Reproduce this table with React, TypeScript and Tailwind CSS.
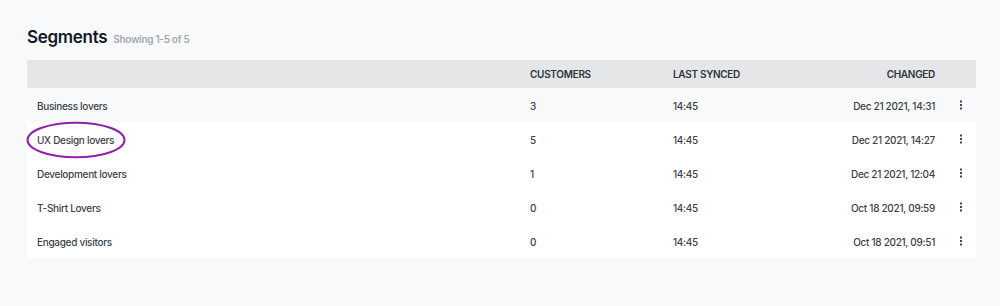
import React from "react";

const rows = [
  { name: "Business lovers", customers: "3", synced: "14:45", changed: "Dec 21 2021, 14:31", bg: "bg-[#f8f9fb]" },
  { name: "UX Design lovers", customers: "5", synced: "14:45", changed: "Dec 21 2021, 14:27", bg: "bg-white" },
  { name: "Development lovers", customers: "1", synced: "14:45", changed: "Dec 21 2021, 12:04", bg: "bg-white" },
  { name: "T-Shirt Lovers", customers: "0", synced: "14:45", changed: "Oct 18 2021, 09:59", bg: "bg-white" },
  { name: "Engaged visitors", customers: "0", synced: "14:45", changed: "Oct 18 2021, 09:51", bg: "bg-white" },
];

function Dots() {
  return (
    <svg width="4" height="10" viewBox="0 0 4 10" className="text-[#3f444d]">
      <rect x="1" y="0.5" width="2" height="2" fill="currentColor" />
      <rect x="1" y="4" width="2" height="2" fill="currentColor" />
      <rect x="1" y="7.5" width="2" height="2" fill="currentColor" />
    </svg>
  );
}

export default function App() {
  return (
    <div
      className="relative w-[1000px] h-[306px] bg-[#f8f9fb] pl-[27px] pr-[24px] pt-[26px]"
      style={{ fontFamily: "Inter, 'Noto Sans', sans-serif" }}
    >
      <div className="flex items-baseline gap-[6px] h-[34px]">
        <h1 className="text-[17px] leading-[22px] font-semibold text-[#111827] tracking-[-0.3px]">Segments</h1>
        <span className="text-[10px] font-semibold text-[#a3a7ae] tracking-[-0.3px]">Showing 1-5 of 5</span>
      </div>
      <div className="w-[949px]">
        <div className="grid grid-cols-[493px_143px_1fr_auto_41px] items-center h-[28px] bg-[#e5e6e8] pl-[10px] pt-[1px] text-[10px] font-semibold text-[#2f3440] tracking-[-0.3px]">
          <div />
          <div>CUSTOMERS</div>
          <div>LAST SYNCED</div>
          <div className="text-right">CHANGED</div>
          <div />
        </div>
        {rows.map((r) => (
          <div
            key={r.name}
            className={`grid grid-cols-[493px_143px_1fr_auto_41px] items-center h-[34px] ${r.bg} pl-[10px] pt-[2px] text-[10px] font-medium text-[#3b3f48] tracking-[-0.3px]`}
          >
            <div>{r.name}</div>
            <div>{r.customers}</div>
            <div>{r.synced}</div>
            <div className="text-right">{r.changed}</div>
            <div className="flex pl-[24px] -mt-[2px]">
              <Dots />
            </div>
          </div>
        ))}
      </div>
      <svg className="absolute left-[26px] top-[121px]" width="100" height="38" viewBox="0 0 100 38">
        <ellipse cx="50" cy="19" rx="48.5" ry="17.3" fill="none" stroke="#9120b0" strokeWidth="2" />
      </svg>
    </div>
  );
}
